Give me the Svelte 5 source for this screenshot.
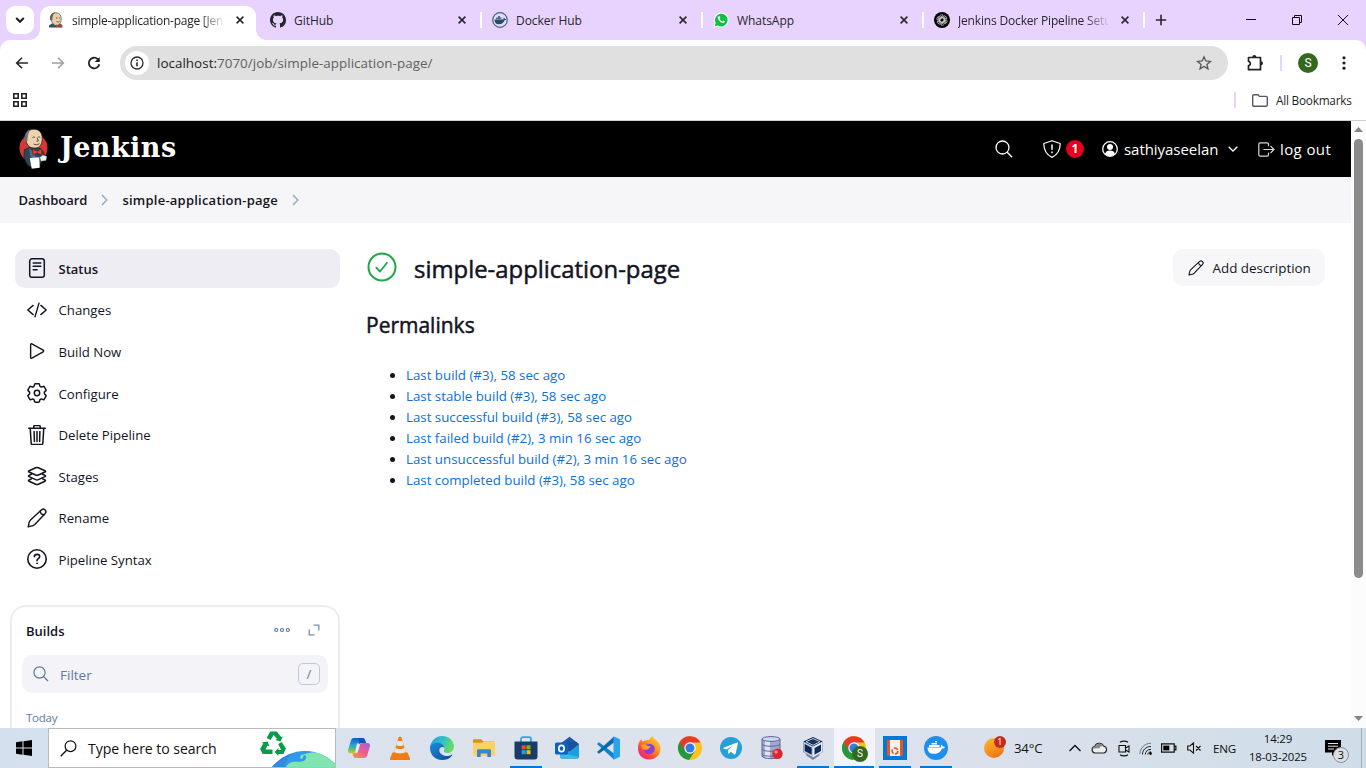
<script>
  const tabs = [
    { title: 'simple-application-page [Jen', icon: 'butler', active: true, long: true },
    { title: 'GitHub', icon: 'github' },
    { title: 'Docker Hub', icon: 'dockerhub' },
    { title: 'WhatsApp', icon: 'whatsapp' },
    { title: 'Jenkins Docker Pipeline Setu', icon: 'gpt', long: true }
  ];

  const tasks = [
    { label: 'Status', icon: 'status', active: true },
    { label: 'Changes', icon: 'code' },
    { label: 'Build Now', icon: 'play' },
    { label: 'Configure', icon: 'gear' },
    { label: 'Delete Pipeline', icon: 'trash' },
    { label: 'Stages', icon: 'layers' },
    { label: 'Rename', icon: 'pencil' },
    { label: 'Pipeline Syntax', icon: 'help' }
  ];

  const permalinks = [
    'Last build (#3), 58 sec ago',
    'Last stable build (#3), 58 sec ago',
    'Last successful build (#3), 58 sec ago',
    'Last failed build (#2), 3 min 16 sec ago',
    'Last unsuccessful build (#2), 3 min 16 sec ago',
    'Last completed build (#3), 58 sec ago'
  ];

  const apps = [
    { icon: 'copilot' },
    { icon: 'vlc' },
    { icon: 'edge' },
    { icon: 'files' },
    { icon: 'store', open: true },
    { icon: 'outlook' },
    { icon: 'vscode' },
    { icon: 'firefox' },
    { icon: 'chrome' },
    { icon: 'telegram' },
    { icon: 'database' },
    { icon: 'vbox', open: true },
    { icon: 'chromeS', open: true, focused: true },
    { icon: 'ubuntu', open: true },
    { icon: 'docker', open: true }
  ];
</script>

{#snippet favicon(name)}
  {#if name === 'butler'}
    <svg width="16" height="16" viewBox="0 0 16 16">
      <path d="M1 15.500v-2l3-2 8 0 2.500 2v2z" fill="#335061" />
      <path d="M3 6C3 2 5 .8 8 .8s5.200 2 5.200 6c0 4-2 6.700-4.700 6.700S3 10 3 6z" fill="#e9cfa7" stroke="#5b5046" stroke-width=".7" />
      <path d="M2 7.500C1.500 3 4 .5 7.500.5 5 2 4.500 4 4.300 8c-1 .6-1.800.4-2.300-.5z" fill="#5f605c" />
      <path d="M8 6h1.500M11 6h1M8.500 9.500c1 .7 2 .7 3 0" stroke="#594a3d" fill="none" stroke-width=".8" />
      <path d="M8 12.500l3 1 3-1v3l-3-1-3 1z" fill="#d33833" />
    </svg>
  {:else if name === 'github'}
    <svg width="16" height="16" viewBox="0 0 16 16"><path fill="#24252b" d="M8 0C3.580 0 0 3.580 0 8c0 3.540 2.290 6.530 5.470 7.590.4.070.55-.17.55-.38 0-.19-.01-.82-.01-1.490-2.010.37-2.530-.49-2.690-.94-.09-.23-.48-.94-.82-1.130-.28-.15-.68-.52-.01-.53.63-.01 1.080.58 1.230.82.72 1.210 1.870.87 2.330.66.070-.52.28-.87.51-1.070-1.780-.2-3.640-.89-3.640-3.950 0-.87.31-1.590.82-2.150-.08-.2-.36-1.020.08-2.120 0 0 .67-.21 2.200.82.64-.18 1.320-.27 2-.27s1.360.09 2 .27c1.530-1.040 2.200-.82 2.200-.82.44 1.100.16 1.920.08 2.120.51.56.82 1.270.82 2.150 0 3.070-1.870 3.750-3.650 3.950.29.25.54.73.54 1.480 0 1.070-.01 1.930-.01 2.200 0 .21.15.46.55.38A8.010 8.010 0 0 0 16 8c0-4.420-3.580-8-8-8z" /></svg>
  {:else if name === 'dockerhub'}
    <svg width="16" height="16" viewBox="0 0 16 16">
      <circle cx="8" cy="8" r="7.300" fill="#e3ddf3" stroke="#48627d" stroke-width="1.200" />
      <path d="M2.500 7.500h8.800c.5-.9.4-1.600.2-2 .9.300 1.400.9 1.500 1.500.5-.1 1 0 1.300.2-.4.800-1 1-1.800 1-.8 2.700-2.800 4-5.500 4C4.500 12.200 2.600 11 2.500 7.500z" fill="#27496b" />
      <path d="M4 5.500h5.500v1.700H4zM6 4h2v1.500H6z" fill="#4d6d8e" />
    </svg>
  {:else if name === 'whatsapp'}
    <svg width="16" height="16" viewBox="0 0 16 16">
      <path d="M.6 15.400l1.200-4A7.300 7.300 0 1 1 4.600 14.300z" fill="#fff" />
      <path d="M1.700 14.300l1-3.300A6.300 6.300 0 1 1 4.900 13.400z" fill="#08c240" />
      <path d="M5.400 4.200c-1 .7-1 2 .3 3.900 1.500 2.100 3.200 3.200 4.800 2.900 1-.2 1.600-1 1.400-1.700l-1.600-.9-.9 1c-1.300-.4-2.200-1.300-2.800-2.500l.8-.8-.8-1.800z" fill="#fff" />
    </svg>
  {:else}
    <svg width="16" height="16" viewBox="0 0 16 16">
      <circle cx="8" cy="8" r="8" fill="#050505" />
      <g fill="none" stroke="#d9d6dc" stroke-width=".75">
        {#each [0, 60, 120, 180, 240, 300] as a}
          <path d="M8 5.500l2.300 1.300v3.200M5.600 5.200a2.100 2.100 0 0 1 3.700-1.700L6 5.400v2.700" transform="rotate({a} 8 8)" />
        {/each}
      </g>
    </svg>
  {/if}
{/snippet}

{#snippet closeX()}
  <svg width="8" height="8" viewBox="0 0 8 8"><path d="M.6.6l6.800 6.800M7.400.6L.6 7.400" stroke="#2b2930" stroke-width="1.600" fill="none" /></svg>
{/snippet}

{#snippet pencil(size)}
  <svg width={size} height={size} viewBox="0 0 20 20" fill="none" stroke="currentColor" stroke-width="1.400" stroke-linejoin="round" stroke-linecap="round">
    <path d="M1.200 18.800l.8-3.800c.2-1.200.7-2 1.500-2.900L14.600 1.800c.9-.9 2.300-.9 3.200 0l.4.400c.9.900.9 2.300 0 3.200L7.800 16.400c-.8.800-1.600 1.300-2.700 1.500z" />
    <path d="M13.300 3c-.2 2.200 1.500 4 3.800 3.800" />
  </svg>
{/snippet}

{#snippet taskIcon(name)}
  {#if name === 'pencil'}
    {@render pencil(20)}
  {:else if name === 'status'}
    <svg width="20" height="20" viewBox="0 0 20 20" fill="none" stroke="currentColor" stroke-width="1.500" stroke-linecap="round">
      <rect x="2.700" y=".8" width="14.600" height="18.400" rx="2.300" />
      <path d="M6.200 5h7.600M6.200 8.300h7.600M6.200 11.700h3.900" />
    </svg>
  {:else if name === 'help'}
    <svg width="20" height="20" viewBox="0 0 20 20" fill="none" stroke="currentColor" stroke-width="1.600" stroke-linecap="round">
      <circle cx="10" cy="10" r="9.200" />
      <path d="M7.300 7.700c.1-1.500 1.200-2.300 2.700-2.300s2.700.9 2.700 2.200c0 2.100-2.700 2-2.700 4.100" />
      <circle cx="10" cy="14.300" r=".5" fill="currentColor" stroke-width=".8" />
    </svg>
  {:else if name === 'gear'}
    <svg width="20" height="20" viewBox="0 0 20 20" fill="none" stroke="currentColor" stroke-width="1.500" stroke-linejoin="round">
      <circle cx="10" cy="10" r="2.700" />
      <path d="M8.400.8h3.200c.5 0 .8.300.9.800l.2 1c.1.500.4.900.9 1.100.5.300 1 .3 1.500.1l1-.3c.5-.2 1 0 1.200.4l1.600 2.700c.3.500.2 1-.2 1.300l-.8.700c-.8.7-.8 2.100 0 2.800l.8.700c.4.300.5.800.2 1.300l-1.600 2.700c-.2.400-.7.600-1.200.4l-1-.3c-1.100-.4-2.200.2-2.400 1.200l-.2 1c-.1.500-.4.800-.9.800H8.400c-.5 0-.8-.3-.9-.8l-.2-1c-.2-1-1.300-1.600-2.400-1.200l-1 .3c-.5.200-1 0-1.200-.4l-1.600-2.700c-.3-.5-.2-1 .2-1.300l.8-.7c.8-.7.8-2.100 0-2.800l-.8-.7c-.4-.3-.5-.8-.2-1.300l1.600-2.700c.2-.4.7-.6 1.200-.4l1 .3c1.100.4 2.200-.2 2.400-1.200l.2-1c.1-.5.400-.8.900-.8z" />
    </svg>
  {:else}
    <svg width="20" height="20" viewBox={name === 'trash' ? '26 26 460 460' : name === 'layers' ? '30 30 452 452' : '8 8 496 496'} fill="none" stroke="currentColor" stroke-width="35" stroke-linecap="round" stroke-linejoin="round">
      {#if name === 'code'}
        <path d="M160 370L28 256l132-114M352 370l132-114-132-114M306 86l-100 340" />
      {:else if name === 'play'}
        <path d="M98 96v320c0 17 17 25 31 17l280-158c14-8 14-30 0-38L129 79c-14-8-31 0-31 17z" />
      {:else if name === 'trash'}
        <path d="M100 100l22 346c1 18 14 30 32 30h204c18 0 31-12 32-30l22-346M66 100h380M182 100V64c0-13 11-24 24-24h100c13 0 24 11 24 24v36M256 176v230M190 176l6 230M322 176l-6 230" />
      {:else}
        <path d="M434.800 137.650l-149.360-68.100c-16.190-7.400-42.690-7.400-58.880 0L77.300 137.650c-17.600 8-17.600 21.090 0 29.090l148 67.500c16.890 7.700 44.690 7.700 61.580 0l148-67.500c17.520-8 17.520-21.100-.08-29.090zM130 320l-52.700 25.600c-17.600 8-17.600 21.100 0 29.100l148 67.500c16.890 7.690 44.690 7.690 61.580 0l148-67.500c17.600-8 17.600-21.100 0-29.100L384 320M130 216l-52.700 25.600c-17.600 8-17.600 21.100 0 29.100l148 67.500c16.890 7.700 44.690 7.700 61.580 0l148-67.500c17.700-8 17.700-21.100.1-29.100L384 216" />
      {/if}
    </svg>
  {/if}
{/snippet}

{#snippet chromeLogo()}
  <circle cx="12" cy="12" r="12" fill="#fcc31e" />
  <path d="M1.600 6A12 12 0 0 0 11 24l6-9L12 12z" fill="#25983f" />
  <path d="M1.600 6A12 12 0 0 1 22.400 6.400H12L6.900 15z" fill="#e33b2e" />
  <circle cx="12" cy="12" r="5.700" fill="#fff" />
  <circle cx="12" cy="12" r="4.500" fill="#2f7de9" />
{/snippet}

{#snippet appIcon(name)}
  <svg width="24" height="24" viewBox="0 0 24 24">
    {#if name === 'copilot'}
      <defs>
        <linearGradient id="cpA" x1="0" y1="0" x2="0" y2="1"><stop offset="0" stop-color="#1557c7" /><stop offset=".45" stop-color="#21a4dc" /><stop offset=".75" stop-color="#5fc26b" /><stop offset="1" stop-color="#e7c51a" /></linearGradient>
        <linearGradient id="cpB" x1="1" y1="0" x2="0" y2="1"><stop offset="0" stop-color="#a55be8" /><stop offset=".5" stop-color="#ec5c92" /><stop offset="1" stop-color="#fb9a45" /></linearGradient>
      </defs>
      <path d="M7 2h8.500c1.500 0 2.200 1 2.600 2.300l.9 2.700h-4c-1.600 0-2.200.8-2.700 2.300l-2 6c-.5 1.400-1.500 2-3 2H3.500C1 17.300.6 15.500 1.300 13L4 4.500C4.500 2.800 5.500 2 7 2z" fill="url(#cpA)" />
      <path d="M17 22H9c-1.600 0-2.400-.8-2.800-2.300L5.500 17.300H8c1.400 0 2.200-.9 2.700-2.300l2-6c.5-1.300 1.200-2 2.800-2h5c2.300 0 3 1.600 2.300 4l-2.600 8.500C19.700 21.200 18.600 22 17 22z" fill="url(#cpB)" />
      <path d="M10 7.500h3.300L11.300 14l-1 2.800H8z" fill="#e6ecf6" />
      <path d="M11.500 2h4c1.500 0 2.200 1 2.600 2.300L19 7h-4c-1.600 0-2.200.4-2.700 1.500z" fill="#1e4fb0" />
    {:else if name === 'vlc'}
      <path d="M4.500 16.500h15l2.500 6a1 1 0 0 1-1 1.500H3a1 1 0 0 1-1-1.500z" fill="#ef7d12" />
      <path d="M10.500 1.500c.3-1 2.700-1 3 0l4.700 16.300c-1.500 2.300-10.900 2.300-12.400 0z" fill="#f08113" />
      <path d="M9.500 5h5l1.200 4.200c-1.700 1-5.700 1-7.400 0zM7.500 12c2 1.400 7 1.400 9 0l1.200 4c-2 1.800-9.400 1.800-11.400 0z" fill="#e8e8e8" />
    {:else if name === 'edge'}
      <defs>
        <linearGradient id="edA" x1="0" y1="0" x2="1" y2=".3"><stop offset="0" stop-color="#239ee0" /><stop offset=".55" stop-color="#30bfca" /><stop offset="1" stop-color="#68dc62" /></linearGradient>
        <linearGradient id="edB" x1="0" y1="0" x2="1" y2="1"><stop offset="0" stop-color="#1d8cd8" /><stop offset="1" stop-color="#0b4b9c" /></linearGradient>
      </defs>
      <path d="M0 12C.5 5 5.500 0 12 0c7 0 12 4.800 12 10.500 0 4-3 6.500-6.500 6.500-3 0-4-1.200-3.600-2.400 1.200-1.700.6-5.600-3.900-6C5.500 8.200 1 10.500 0 12z" fill="url(#edA)" />
      <path d="M0 12c0-4 4.500-5.500 8-5.200 3.500.3 6 2.500 6.200 4.700-1.400-1.300-4.900-.4-4.900 2.500 0 3.800 4.200 6.300 8.200 6 1.800-.1 3-.7 4-1.300.6-.3.900.2.500.7C20 22.500 16.500 24 12 24 5 24 0 18.500 0 12z" fill="url(#edB)" />
    {:else if name === 'files'}
      <path d="M1 4.500c0-.8.500-1.200 1.200-1.200h7l2 2H22v4H1z" fill="#d79516" />
      <path d="M1 6.800h9l1.800-1.600h9.700c1 0 1.500.5 1.500 1.300V19c0 .6-.4 1-1 1H2c-.6 0-1-.4-1-1z" fill="#fbd266" />
      <path d="M5 21v-6.500c0-.8.500-1.300 1.300-1.300h11.400c.8 0 1.300.5 1.300 1.300V21h-3.700v-3.500H8.700V21z" fill="#3a87c8" />
    {:else if name === 'store'}
      <path d="M7 6.500V3.200C7 2 7.700 1.200 9 1.200h6c1.300 0 2 .8 2 2v3.300" fill="none" stroke="#2ba6dd" stroke-width="1.800" />
      <path d="M.5 5.500h23V20.500c0 2-1 3-3 3h-17c-2 0-3-1-3-3z" fill="#1b3c69" />
      <path d="M7.700 9.300h4v4h-4z" fill="#f25022" /><path d="M12.500 9.300h4v4h-4z" fill="#7fba00" /><path d="M7.700 14.200h4v4h-4z" fill="#12a8e9" /><path d="M12.500 14.200h4v4h-4z" fill="#ffb900" />
    {:else if name === 'outlook'}
      <path d="M5 8L14.500.8 24 8v12.500c0 1.200-.8 2-2 2H7c-1.200 0-2-.8-2-2z" fill="#1b57ab" />
      <path d="M7 6h15v9H7z" fill="#1c4f9c" />
      <path d="M5 11l9.500 5L24 8.500v12c0 1.200-.8 2-2 2H7c-1.200 0-2-.8-2-2z" fill="#33bdf0" />
      <path d="M24 8.500L11 18l13 3z" fill="#189ddf" />
      <rect x="0" y="6.500" width="13" height="12" rx="1.500" fill="#0c63be" />
      <ellipse cx="6.500" cy="12.500" rx="2.700" ry="3.100" fill="none" stroke="#fff" stroke-width="1.700" />
    {:else if name === 'vscode'}
      <path d="M1 8l2-1.700L18 17.500v6z" fill="#1182cb" />
      <path d="M1 16l2 1.700L18 6.500v-6z" fill="#0869b1" />
      <path d="M17.500.3L24 3.200v17.600l-6.500 3z" fill="#29a3ee" />
    {:else if name === 'firefox'}
      <defs><linearGradient id="ff" x1="1" y1="0" x2=".2" y2="1"><stop offset="0" stop-color="#ffe23f" /><stop offset=".45" stop-color="#ff9420" /><stop offset=".75" stop-color="#fb4340" /><stop offset="1" stop-color="#e62787" /></linearGradient></defs>
      <path d="M1 13C.7 8.500 2.300 5 4.500 3c0 1.500.4 2.200 1 2.600C8 4.300 10.500 4 12 4c1-1.600 2.200-3 3.700-4 .3 2 2 3 3.600 4.300C22 6.500 23.500 9.500 23.500 13c0 6.300-5 10.500-11.500 10.500S1.300 19 1 13z" fill="url(#ff)" />
      <path d="M7 10c1.500-2 5-2.500 7.500-1.700 2.400.8 3.500 2.700 3.200 5.200-.4 3-3 4.800-5.700 4.600-3-.1-5.300-2-5.300-4.500 1 .9 2.700.8 4.200-.2 1-.7 1.400-1.300.9-1.700-1.600-.3-3.700.3-4.800-1.700z" fill="#8344d6" />
      <path d="M4 9c2.500-1.600 5-.6 6.200.7 1 .5 2.500.4 3.500.7-.5 1.400-2.200 1.700-3.500 2.500-2 1.200-4 .8-5.200-.6z" fill="#ff9e2b" />
    {:else if name === 'chrome' || name === 'chromeS'}
      {@render chromeLogo()}
    {:else if name === 'telegram'}
      <circle cx="12" cy="12" r="11" fill="#27a0d8" />
      <path d="M4.500 11.700l13.500-5.200c.7-.2 1.100.1.900 1l-2.300 10.300c-.2.800-.7 1-1.300.6l-3.500-2.600-1.700 1.700c-.4.400-.8.200-.8-.3l-.2-3.200 5.500-4.800-7 4.300-3-1c-.8-.2-.7-.6-.1-.8z" fill="#fff" />
    {:else if name === 'database'}
      <path d="M2 3v17c0 3.500 18 3.500 18 0V3z" fill="#9fa9cf" />
      <path d="M5 4h5v18H5z" fill="#dfe4f5" />
      <path d="M2 8c0 3 18 3 18 0M2 13c0 3 18 3 18 0M2 18c0 3 18 3 18 0M2 3v17c0 3.500 18 3.500 18 0V3" fill="none" stroke="#5c6799" stroke-width="1" />
      <ellipse cx="11" cy="3" rx="9" ry="2.400" fill="#cfd6ee" stroke="#5c6799" />
      <circle cx="17.500" cy="17.800" r="5.200" fill="#dd2530" /><circle cx="16" cy="16" r="1.700" fill="#ff8c8c" />
    {:else if name === 'vbox'}
      <path d="M4.500 19l7.500 5 7-5-7-4z" fill="#7a85a0" />
      <path d="M2.500 5.500L12 1l9.500 4.500V16L12 21.500 2.500 16z" fill="#0b2041" />
      <path d="M12 10.500l9.500-5V16L12 21.500z" fill="#e4edf5" /><path d="M13.500 12l6.500-3.400v6.500l-6.500 3.600z" fill="#102d5a" />
      <path d="M2.500 5.500l9.500 5v11L2.500 16z" fill="#bdccdf" /><path d="M3.700 8l7 3.700v7L3.700 15z" fill="#0c2852" />
      <path d="M5 5.700l7-3.200 7 3.200-7 3.600z" fill="#15345f" stroke="#d8e2ee" stroke-width=".9" />
    {:else if name === 'ubuntu'}
      <path d="M0 0h24v24H0z" fill="#0078d7" /><path d="M4 4h16v16H4z" fill="#f4f1ef" /><path d="M4 4h3v16H4zM17 4h3v16h-3z" fill="#e95420" />
      <circle cx="12" cy="15" r="2.900" fill="none" stroke="#e95420" stroke-width="1.600" stroke-dasharray="4.500 1.500" />
    {:else}
      <circle cx="12" cy="12" r="12" fill="#1f8fee" />
      <path d="M3.500 11.500h13.200c.6-1.200.5-2.100 0-3 1.300.5 1.900 1.300 2 2.200.9-.2 1.700 0 2.300.4-.6 1.200-1.600 1.600-3 1.500-1.300 3.700-4 5.200-7.900 5.200-4.500 0-6.500-2.200-6.600-6.300z" fill="#fff" />
      <path d="M5 9h10.500v2H5zM7.500 7h5.500v1.500H7.500zM11 5h2v1.500h-2z" fill="#fff" />
    {/if}
  </svg>
  {#if name === 'chromeS'}<b class="app-badge">S</b>{/if}
{/snippet}

<div class="screen">
  <div class="tabstrip">
    <div class="tab-search"><svg width="10" height="8" viewBox="0 0 10 8"><path d="M1.200 2L5 5.800 8.800 2" fill="none" stroke="#1f1f1f" stroke-width="2" /></svg></div>
    {#each tabs as tab}
      <div class="tab" class:active={tab.active}>
        {@render favicon(tab.icon)}
        <span class="tab-title" class:faded={tab.long}>{tab.title}</span>
        {@render closeX()}
        {#if !tab.active}<i class="tab-sep"></i>{/if}
      </div>
    {/each}
    <svg class="new-tab" width="12" height="12" viewBox="0 0 12 12"><path d="M6 .8v10.400M.8 6h10.400" stroke="#28252e" stroke-width="1.600" /></svg>
    <div class="win">
      <svg width="46" height="40" viewBox="0 0 46 40"><path d="M18 19.500h10" stroke="#111" /></svg>
      <svg width="46" height="40" viewBox="0 0 46 40"><path d="M18.500 17.500h7v7h-7zM20.500 17.500v-2h7v7h-2" stroke="#111" fill="none" /></svg>
      <svg width="46" height="40" viewBox="0 0 46 40"><path d="M18 15l10 10M28 15L18 25" stroke="#111" fill="none" /></svg>
    </div>
  </div>

  <div class="chrome-panel">
    <div class="toolbar">
      <svg class="nav" width="14" height="14" viewBox="0 0 14 14"><path d="M13 7H2M7 1.700L1.700 7 7 12.300" stroke="#27252b" stroke-width="1.600" fill="none" /></svg>
      <svg class="nav" width="14" height="14" viewBox="0 0 14 14"><path d="M1 7h11M7 1.700L12.300 7 7 12.300" stroke="#a09ea3" stroke-width="1.600" fill="none" /></svg>
      <svg class="nav" width="14" height="14" viewBox="0 0 14 14"><path d="M12.300 8.200A5.300 5.300 0 1 1 10.700 3.100L12.400 5" stroke="#232127" stroke-width="1.800" fill="none" /><path d="M12.700 1v5H7.700z" fill="#232127" /></svg>
      <div class="omnibox">
        <div class="site-info"><svg width="14" height="14" viewBox="0 0 14 14"><circle cx="7" cy="7" r="6" fill="none" stroke="#2a2a2c" stroke-width="1.300" /><path d="M7 6.300v4M7 3.600v1.500" stroke="#2a2a2c" stroke-width="1.600" /></svg></div>
        <span class="url"><em>localhost:</em>7070/job/simple-application-page/</span>
        <svg width="16" height="16" viewBox="0 0 16 16"><path d="M8 1.800l1.800 4.200 4.600.4-3.500 3 1.100 4.500L8 11.500l-4 2.400 1.100-4.500-3.500-3L6.200 6z" fill="none" stroke="#55565a" stroke-width="1.300" /></svg>
      </div>
      <svg class="ext" width="18" height="18" viewBox="0 0 18 18"><path d="M2.500 3.500h12v12.200h-12v-4c2.400-.2 2.400-4 0-4.200z" fill="none" stroke="#232127" stroke-width="1.700" stroke-linejoin="round" /><path d="M6.300 3a2 2 0 0 1 4 0zM15 7.300a2 2 0 0 1 0 4z" fill="#232127" /></svg>
      <i class="tool-sep"></i>
      <b class="avatar">S</b>
      <svg class="kebab" width="4" height="16" viewBox="0 0 4 16"><circle cx="2" cy="2.800" r="1.600" fill="#222" /><circle cx="2" cy="8" r="1.600" fill="#222" /><circle cx="2" cy="13.200" r="1.600" fill="#222" /></svg>
    </div>
    <div class="bookmarks">
      <svg width="14" height="14" viewBox="0 0 14 14"><path d="M.8.8h4.400v4.400H.8zM8.800.8h4.400v4.400H8.800zM.8 8.800h4.400v4.400H.8zM8.800 8.800h4.400v4.400H8.800z" fill="none" stroke="#232127" stroke-width="1.600" /></svg>
      <i class="tool-sep bm-sep"></i>
      <svg width="16" height="13" viewBox="0 0 16 13"><path d="M.7 2c0-.8.500-1.300 1.200-1.300h4l1.600 1.700h6.600c.7 0 1.200.5 1.200 1.200V11c0 .8-.5 1.300-1.200 1.300H1.900c-.7 0-1.200-.5-1.200-1.300z" fill="none" stroke="#5a595e" stroke-width="1.400" /></svg>
      <span>All Bookmarks</span>
    </div>
  </div>

  <div class="viewport">
    <div class="page">
      <header>
        <svg width="30" height="42" viewBox="0 0 30 42">
          <ellipse cx="14.500" cy="20" rx="14" ry="14" fill="#d33833" />
          <path d="M5.500 21.500l6-2.500 10 1.500 3 3.500 1 5-3 4-2 6-10-.5C5.500 34.500 4 28 5.500 21.500z" fill="#2b4756" stroke="#14202a" stroke-width=".6" />
          <path d="M10 20.500l5 4 2.500 6.500-6-2z" fill="#4b6e84" />
          <path d="M6.500 9c.5-5 3.800-7.800 8.500-7.800 5.500 0 8.300 3.600 8.300 9.500 0 5-2.500 9.300-6.800 9.300C10.300 20.600 6.700 16.500 6.500 9z" fill="#ecd2ae" stroke="#2d2520" stroke-width=".8" />
          <path d="M5.800 13C4.500 6.500 7.500 1.700 12.500 1.200 9.500 3 8.800 7 8.400 13c-.6 1.600-1.900 1.600-2.600 0z" fill="#6e7071" />
          <path d="M13.500 9.500c.8-.6 1.800-.6 2.500 0M19 9.300c.7-.5 1.500-.5 2.200 0M18 9.500l1.300 3.500-1.700.4M14.500 16c2 1.200 4.300 1 6-.5" fill="none" stroke="#3d2d24" stroke-width=".8" />
          <path d="M13.500 21l4.800 2.300 4.500-2.500v6.200l-4.500-2-4.300 2z" fill="#e1403b" stroke="#5f1512" stroke-width=".6" />
          <path d="M10.800 30l9.500-.7.4 10.500-8 1z" fill="#fff" />
          <path d="M20.800 29.500l3-2.500 4.200 1.500-1 4-5 .8z" fill="#efefef" stroke="#555" stroke-width=".4" />
        </svg>
        <span class="brand">Jenkins</span>
        <svg class="h-search" width="18" height="18" viewBox="0 0 18 18"><circle cx="7.500" cy="7.500" r="6.500" fill="none" stroke="#fff" stroke-width="1.300" /><path d="M12.200 12.200l5 5" stroke="#fff" stroke-width="1.400" /></svg>
        <svg class="h-shield" width="18" height="18" viewBox="0 0 18 18"><path d="M9 .7l8.200 2.800C17.300 10 15 14.600 9 17.400 3 14.600.7 10 .8 3.500z" fill="none" stroke="#fff" stroke-width="1.200" stroke-linejoin="round" /><path d="M9 4.500v5.200M9 11.500v1.700" stroke="#fff" stroke-width="1.500" /></svg>
        <b class="alerts">1</b>
        <svg class="h-user" width="16" height="16" viewBox="0 0 16 16"><circle cx="8" cy="8" r="7.300" fill="none" stroke="#fff" stroke-width="1.300" /><circle cx="8" cy="6" r="3" fill="#fff" /><path d="M3 13c.5-2.500 2.500-3.500 5-3.500s4.500 1 5 3.500c-1.400 1.400-3 2-5 2s-3.600-.6-5-2z" fill="#fff" /></svg>
        <span class="user">sathiyaseelan</span>
        <svg class="h-chev" width="10" height="6" viewBox="0 0 10 6"><path d="M.7.7L5 5 9.300.7" fill="none" stroke="#fff" stroke-width="1.300" /></svg>
        <svg class="h-out" width="17" height="15" viewBox="0 0 17 15"><path d="M10.500 4.300V2.200C10.500 1.300 10 .8 9.100.8H2.200C1.300.8.8 1.300.8 2.200v10.600c0 .9.500 1.400 1.400 1.400h6.900c.9 0 1.400-.5 1.400-1.400v-2.100M5.500 7.500H16M12.500 4l3.500 3.500-3.500 3.500" fill="none" stroke="#d8d8d8" stroke-width="1.200" /></svg>
        <span class="logout">log out</span>
      </header>
      <nav class="crumbs">
        <span>Dashboard</span>
        <svg width="7" height="12" viewBox="0 0 7 12"><path d="M1 1L5.800 6 1 11" fill="none" stroke="#8fa8c8" stroke-width="1.400" /></svg>
        <span class="c2">simple-application-page</span>
        <svg width="7" height="12" viewBox="0 0 7 12"><path d="M1 1L5.800 6 1 11" fill="none" stroke="#8fa8c8" stroke-width="1.400" /></svg>
      </nav>
      <div class="body">
        <aside>
          <ul class="tasks">
            {#each tasks as task}
              <li class:active={task.active}>{@render taskIcon(task.icon)}<span>{task.label}</span></li>
            {/each}
          </ul>
          <section class="builds">
            <div class="builds-head">
              <h3>Builds</h3>
              <svg class="more" width="16" height="6" viewBox="0 0 16 6"><g fill="none" stroke="#5b7a9e" stroke-width="1.200"><circle cx="2.200" cy="3" r="1.500" /><circle cx="8" cy="3" r="1.500" /><circle cx="13.800" cy="3" r="1.500" /></g></svg>
              <svg class="expand" width="12" height="12" viewBox="0 0 12 12"><path d="M5.500 1.200h5.300v5.300M1.200 5.500v5.300h5.300" fill="none" stroke="#7590af" stroke-width="1.300" /></svg>
            </div>
            <div class="filter">
              <svg width="16" height="16" viewBox="0 0 16 16"><circle cx="6.500" cy="6.500" r="5.600" fill="none" stroke="#5b7a9e" stroke-width="1.200" /><path d="M10.600 10.600l4.400 4.400" stroke="#5b7a9e" stroke-width="1.300" /></svg>
              <span>Filter</span>
              <kbd>/</kbd>
            </div>
            <p>Today</p>
          </section>
        </aside>
        <main>
          <div class="title-row">
            <svg class="ok" width="30" height="30" viewBox="0 0 30 30"><circle cx="15" cy="15" r="13.500" fill="none" stroke="#1ea64b" stroke-width="2" /><path d="M9.300 15.700l3.700 3.800 7-8.700" fill="none" stroke="#1ea64b" stroke-width="1.800" stroke-linecap="round" stroke-linejoin="round" /></svg>
            <h1>simple-application-page</h1>
            <div class="add">{@render pencil(16)}<span>Add description</span></div>
          </div>
          <h2>Permalinks</h2>
          <ul class="links">
            {#each permalinks as link}
              <li><span>{link}</span></li>
            {/each}
          </ul>
        </main>
      </div>
    </div>
    <div class="scrollbar">
      <svg width="9" height="5" viewBox="0 0 9 5"><path d="M4.500 0L9 5H0z" fill="#858585" /></svg>
      <i class="thumb"></i>
      <svg width="9" height="5" viewBox="0 0 9 5"><path d="M0 0h9L4.500 5z" fill="#858585" /></svg>
    </div>
  </div>

  <footer class="taskbar">
    <div class="start"><svg width="16" height="16" viewBox="0 0 16 16"><path d="M0 2.300l6.500-1v6.200H0zM7.500 1.200L16 0v7.500H7.500zM0 8.500h6.500v6.200l-6.500-1zM7.500 8.500H16V16l-8.500-1.200z" fill="#000" /></svg></div>
    <div class="search">
      <svg width="17" height="17" viewBox="0 0 17 17"><circle cx="10.500" cy="6.200" r="5.400" fill="none" stroke="#111" stroke-width="1.200" /><path d="M6.800 10L.7 16.200" stroke="#111" stroke-width="1.300" /></svg>
      <span>Type here to search</span>
      <svg class="earth" width="76" height="38" viewBox="0 0 76 38">
        <g fill="#0a9b49" transform="translate(0 2) scale(1.080 1)">
          <path d="M7 7l3.500-6.500h6L20.500 6l1.500-.5-2 5-5-1.500 1.700-1L13.500 4l-2.800 5z" />
          <path d="M21 11l4 6.500-2.500 5.500H18v2l-3.500-4 3.500-4v2h2.500L17.800 13z" />
          <path d="M12.500 23H3.500L1 18l3-5.500-1.700-1 5.700-1 1.700 5-1.900-.9L6 18.500h6.500z" />
        </g>
        <clipPath id="globe"><circle cx="46" cy="64.500" r="42.500" /></clipPath>
        <g clip-path="url(#globe)">
          <path d="M0 20h76v18H0z" fill="#3388e4" />
          <path d="M26 38c0-9 8-16 20-16l6 0-8 16z" fill="#2e9bea" />
          <path d="M42 26l10-2.500 24-1.500v16H27c2-4 6-5.500 10-5.500 6 1 11-1 10-5-.6-2-3-1.500-3 .5s-2 2.500-3 1z" fill="#80e5af" />
        </g>
      </svg>
    </div>
    <div class="apps">
      {#each apps as app}
        <div class="app" class:open={app.open} class:focused={app.focused}>{@render appIcon(app.icon)}</div>
      {/each}
    </div>
    <div class="weather"><i></i><b>1</b></div>
    <span class="temp">34°C</span>
    <div class="tray">
      <svg width="14" height="8" viewBox="0 0 14 8"><path d="M1.500 7L7 1.500 12.500 7" fill="none" stroke="#111" stroke-width="1.300" /></svg>
      <svg width="17" height="12" viewBox="0 0 17 12"><path d="M4 11a3.300 3.300 0 0 1-.3-6.500A4.700 4.700 0 0 1 12.500 4 3.600 3.600 0 0 1 13 11z" fill="#eee" stroke="#222" stroke-width="1.100" /><path d="M1.500 7a3 3 0 0 1 2.500-2.500A4.700 4.700 0 0 1 12.500 4c-3 0-3.500 1-4.500 2.500C6 6 3.500 6 1.500 7z" fill="#8a8a8a" /></svg>
      <svg width="12" height="17" viewBox="0 0 12 17"><path d="M1 5.500h6.500v6.500H1zM7.500 8l3.500-2v6L7.500 10M2 2.300C4 .7 8 .7 10 2.300M2 14.700c2 1.600 6 1.600 8 0" fill="none" stroke="#111" stroke-width="1.100" /></svg>
      <svg width="13" height="13" viewBox="0 0 13 13"><g fill="none" stroke="#222" stroke-width="1"><path d="M1 12C1 6 5.500 1.500 12 1.200" opacity=".55" /><path d="M3.500 12.500c0-4.600 3.500-8 8.500-8M6.300 12.500c0-3 2.300-5.200 5.700-5.200" /><path d="M8.800 12.500c0-1.500 1.400-2.700 3.200-2.700" /></g><circle cx="11.500" cy="11.500" r="1.400" fill="#111" /></svg>
      <svg width="16" height="10" viewBox="0 0 16 10"><path d="M.6.900h12.600v8.200H.6zM13.300 3.200h1.600v3.600h-1.600" fill="none" stroke="#111" stroke-width="1.200" /><path d="M2.300 2.600h6v4.800h-6z" fill="#000" /></svg>
      <svg width="15" height="12" viewBox="0 0 15 12"><path d="M.7 4h2.200L6.500.9v10.200L2.900 8H.7zM9 4l4.500 4.500M13.500 4L9 8.500" fill="none" stroke="#111" stroke-width="1.100" /></svg>
    </div>
    <span class="lang">ENG</span>
    <div class="clock"><span>14:29</span><span>18-03-2025</span></div>
    <div class="notif"><svg width="16" height="16" viewBox="0 0 16 16"><path d="M0 0h16v12.500h-6L7 16v-3.500H0z" fill="#000" /><path d="M3 3.500h10M3 6.200h10M3 9h6" stroke="#dce5ed" /></svg><b>3</b></div>
    <i class="peek"></i>
  </footer>
</div>

<style>
  :global(body) { overflow: hidden; }
  .screen { width: 1366px; height: 768px; display: flex; flex-direction: column; background: #e8d3ff; font-family: "Open Sans", "Noto Sans", sans-serif; color: #14141f; overflow: hidden; }
  svg { display: block; flex: none; }
  ul, h1, h2, h3, p { margin: 0; padding: 0; }
  span { white-space: nowrap; }

  .tabstrip { height: 40px; display: flex; flex: none; font-size: 12px; color: #28252e; }
  .tab-search { width: 28px; height: 28px; margin: 6px 6px 0; border-radius: 9px; background: #fff; display: grid; place-items: center; flex: none; }
  .tab { position: relative; box-sizing: border-box; width: 221px; height: 34px; margin-top: 6px; padding: 0 15px 6px 10px; display: flex; align-items: center; flex: none; }
  .tab-title { flex: 1; min-width: 0; margin-left: 8px; padding-top: 1px; letter-spacing: -0.05px; line-height: 18px; }
  .faded { margin-right: 12px; letter-spacing: -0.17px; -webkit-mask-image: linear-gradient(90deg, #000 84%, transparent 101%); mask-image: linear-gradient(90deg, #000 84%, transparent 101%); }
  .tab-sep { position: absolute; right: 0; top: 6px; width: 2px; height: 16px; background: #fff; }
  .tab.active { width: 216px; margin-right: 5px; padding: 0 12px 6px 8px; background: #fff; border-radius: 10px 10px 0 0; color: #1f1f1f; }
  .tab.active + .tab { padding-left: 9px; }
  .tab.active .tab-title { letter-spacing: -0.25px; }
  .tab.active::before, .tab.active::after { content: ""; position: absolute; bottom: 0; width: 10px; height: 10px; }
  .tab.active::before { left: -10px; background: radial-gradient(circle at 0 0, transparent 9.500px, #fff 10px); }
  .tab.active::after { right: -10px; background: radial-gradient(circle at 100% 0, transparent 9.500px, #fff 10px); }
  .tab:not(.active) > :global(svg:last-of-type) { margin-right: 1px; }
  .new-tab { margin: 14px 0 0 10px; }
  .win { display: flex; margin-left: auto; }

  .chrome-panel { height: 80px; flex: none; background: #fff; border-radius: 10px 10px 0 0; border-bottom: 1px solid #cfd0d0; }
  .toolbar { height: 46px; display: flex; align-items: center; padding-left: 15px; }
  .nav { margin-right: 22px; }
  .omnibox { width: 1108px; height: 34px; margin-left: -3px; border-radius: 17px; background: #e0e0e0; display: flex; align-items: center; flex: none; box-sizing: border-box; padding: 0 16px 0 5px; }
  .site-info { width: 24px; height: 24px; border-radius: 50%; background: #fff; display: grid; place-items: center; }
  .url { flex: 1; margin-left: 8px; font-size: 13.400px; color: #5f6063; letter-spacing: 0.04px; }
  .url em { font-style: normal; color: #1f1f1f; }
  .ext { margin-left: 18px; }
  .tool-sep { width: 2px; height: 16px; margin-left: 16px; background: #e8d3ff; }
  .avatar { width: 20px; height: 20px; margin-left: 16px; border-radius: 50%; background: #33691e; color: #fff; font: 12px/20px Roboto, sans-serif; text-align: center; }
  .kebab { margin-left: 24px; }
  .bookmarks { height: 28px; display: flex; align-items: center; padding: 0 15px 0 13px; font-size: 11.800px; color: #1f1f1f; }
  .bookmarks span { margin-left: 8px; width: 75px; letter-spacing: -0.23px; }
  .bm-sep { margin-left: auto; margin-right: 16px; }

  .viewport { height: 607px; flex: none; display: flex; background: #fff; }
  .page { width: 1351px; height: 607px; overflow: hidden; }
  header { height: 56px; background: #000; color: #fff; display: flex; align-items: center; box-sizing: border-box; padding-left: 19px; font-size: 15px; }
  .brand { width: 117px; margin: -2px 817px 0 11px; font: bold 27px/32px "DejaVu Serif", serif; letter-spacing: 0.450px; }
  .h-search { margin-left: 1px; }
  .h-shield { margin-left: 30px; }
  .alerts { width: 18px; height: 18px; margin-left: 5px; border-radius: 50%; background: #e6001f; font-size: 12px; line-height: 18px; text-align: center; }
  .h-user { margin-left: 18px; }
  .user { width: 96px; margin-left: 6px; letter-spacing: -0.05px; }
  .h-chev { margin-left: 8px; }
  .h-out { margin-left: 20px; }
  .logout { margin-left: 5px; letter-spacing: 0.4px; }
  .crumbs { height: 46px; background: #f6f6f8; display: flex; align-items: center; padding-left: 18.500px; font-size: 13px; font-weight: 600; }
  .crumbs svg { margin: 0 14px; }
  .c2 { letter-spacing: 0.230px; }
  .body { display: flex; }
  aside { width: 330px; padding: 26px 0 0 10px; flex: none; }
  .tasks { list-style: none; padding-left: 5px; height: 356px; }
  .tasks li { height: 38.600px; margin-bottom: 3px; border-radius: 10px; display: flex; align-items: center; padding-left: 12px; font-size: 13.200px; }
  .tasks li span { margin-left: 11.500px; padding-top: 1px; }
  .tasks li.active { background: #ededf3; font-weight: 600; font-size: 13px; }
  .builds { box-sizing: border-box; width: 330px; height: 200px; border: 2px solid #ecebf3; border-radius: 16px; padding: 10px; }
  .builds-head { height: 27px; padding: 0 8px 0 4px; display: flex; align-items: center; }
  .builds-head h3 { flex: 1; padding-top: 1px; font-size: 13px; font-weight: 600; }
  .more, .expand { margin-bottom: 2px; }
  .expand { margin-left: 18px; }
  .filter { height: 38px; margin-top: 11px; box-sizing: border-box; border-radius: 10px; background: #f3f3f8; display: flex; align-items: center; padding: 0 8px 0 11px; font-size: 13.500px; color: #5e7a9f; }
  .filter span { flex: 1; margin-left: 11px; padding-top: 1px; }
  kbd { width: 20px; height: 20px; border: 1px solid #bccbdb; border-radius: 5px; font: 13px/20px "Open Sans", sans-serif; text-align: center; }
  .builds p { margin: 16px 0 0 4px; font-size: 11.600px; line-height: 18px; letter-spacing: -0.3px; color: #5e7a9f; }

  main { flex: 1; padding: 26px 26px 0 26px; }
  .title-row { height: 37px; display: flex; align-items: center; padding-left: 1px; }
  .ok { margin-bottom: 2px; }
  h1 { flex: 1; margin-left: 17px; font-size: 23.900px; font-weight: 400; -webkit-text-stroke: 0.500px currentColor; line-height: 36px; padding-top: 2px; }
  .add { width: 152px; height: 37px; box-sizing: border-box; border-radius: 10px; background: #f7f7f9; display: flex; align-items: center; padding-left: 15px; font-size: 13.400px; }
  .add span { margin-left: 8.500px; }
  h2 { margin-top: 24px; font-size: 21px; font-weight: 400; -webkit-text-stroke: 0.500px currentColor; line-height: 30px; }
  .links { margin-top: 25px; padding-left: 40px; list-style: disc; font-size: 13.300px; line-height: 21px; }
  .links span { color: #0b6fdc; }

  .scrollbar { width: 15px; background: #fcfcfc; display: flex; flex-direction: column; align-items: center; padding: 6px 0 7px; box-sizing: border-box; }
  .thumb { width: 9px; height: 439px; margin: 7px 0 auto; border-radius: 5px; background: #8b8b8b; }

  .taskbar { height: 40px; flex: none; display: flex; align-items: center; background: linear-gradient(90deg, #d3e0ee, #dde3ed 35%, #dde2ed 65%, #cfdde8); color: #111; }
  .start { width: 48px; display: grid; place-items: center; }
  .search { box-sizing: border-box; width: 288px; height: 40px; border: 1px solid #b9bcbf; background: #fff; display: flex; align-items: center; padding-left: 11px; font-size: 14.100px; }
  .search span { width: 128px; margin-left: 11px; letter-spacing: -0.06px; }
  .earth { margin-left: auto; }
  .apps { display: flex; margin-left: 2.400px; }
  .app { position: relative; width: 41.050px; height: 40px; display: grid; place-items: center; }
  .app:nth-child(2), .app:nth-child(3), .app:nth-child(4) { width: 41.900px; }
  .app.open::after { content: ""; position: absolute; left: 4.500px; right: 4.500px; bottom: 0; height: 2px; background: #0078d7; }
  .app.focused { background: linear-gradient(90deg, transparent 0.600px, #f2f4f9 0.600px); }
  .app.focused::after { left: 0.600px; right: 0.600px; }
  .app-badge { position: absolute; left: 18.500px; top: 18px; width: 16px; height: 16px; border-radius: 50%; background: #33691e; color: #fff; font: 10px/16px Roboto, sans-serif; text-align: center; }
  .weather { position: relative; width: 20px; height: 20px; margin-left: 27.300px; }
  .weather i { display: block; width: 20px; height: 20px; border-radius: 50%; background: linear-gradient(150deg, #f9bd2d, #ef6a10); }
  .weather b { position: absolute; left: 10px; top: -2px; width: 12px; height: 12px; border-radius: 50%; background: #c42b1c; color: #fff; font: 9px/12px "Open Sans", sans-serif; text-align: center; }
  .temp { width: 30px; margin-left: 10px; font-size: 13.200px; letter-spacing: -0.1px; }
  .tray { display: flex; align-items: center; width: 134px; margin-left: 24px; justify-content: space-between; }
  .lang { width: 24px; margin-left: 11px; font-size: 11.600px; letter-spacing: -0.2px; }
  .clock { width: 60px; margin-left: 11px; display: flex; flex-direction: column; align-items: center; font-size: 11.400px; line-height: 18px; letter-spacing: -0.15px; }
  .notif { position: relative; margin-left: 17px; }
  .notif b { position: absolute; left: 8px; top: 7px; width: 14px; height: 14px; border: 1px solid #8c9094; border-radius: 50%; background: #dcdfe2; font: 11px/14px "Open Sans", sans-serif; text-align: center; }
  .peek { width: 1px; height: 40px; margin-left: 20px; background: #9fabb5; }
</style>
